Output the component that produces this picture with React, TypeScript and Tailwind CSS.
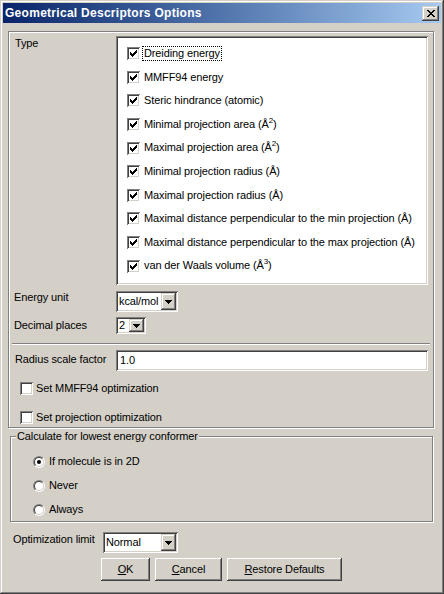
import React from "react"

const font = "font-['Liberation_Sans',Arial,sans-serif]"
const sunken = "shadow-[inset_1px_1px_#808080,inset_-1px_-1px_#ffffff,inset_2px_2px_#404040,inset_-2px_-2px_#d4d0c8]"
const raised = "shadow-[inset_-1px_-1px_#404040,inset_1px_1px_#ffffff,inset_-2px_-2px_#808080,inset_2px_2px_#d4d0c8]"
const raisedSmall = "shadow-[inset_-1px_-1px_#404040,inset_1px_1px_#d4d0c8,inset_-2px_-2px_#808080,inset_2px_2px_#ffffff]"
const etched = "border border-[#808080] shadow-[1px_1px_0_#ffffff,inset_1px_1px_0_#ffffff]"

// pixel glyphs, one string per row
const Pixels = ({rows, color="#000"}:{rows:string[], color?:string}) => (
    <svg width={rows[0].length} height={rows.length} shapeRendering="crispEdges">
        {rows.map((r, y) => r.split("").map((c, x) => c === "#" ? <rect key={x + "-" + y} x={x} y={y} width="1" height="1" fill={color}/> : null))}
    </svg>
)

const CHECK = [
    "......#",
    ".....##",
    "#...###",
    "##.###.",
    "#####..",
    ".###...",
    "..#....",
]
const ARROW = ["#######", ".#####.", "..###..", "...#..."]
const CLOSE = [
    "##....##",
    ".##..##.",
    "..####..",
    "...##...",
    "..####..",
    ".##..##.",
    "##....##",
]

const CheckBox = ({checked}:{checked?:boolean}) => (
    <span className={`flex items-center justify-center w-[13px] h-[13px] bg-white shrink-0 ${sunken}`}>
        {checked ? <Pixels rows={CHECK}/> : null}
    </span>
)

const Radio = ({checked}:{checked?:boolean}) => (
    <span className="block w-[12px] h-[12px] shrink-0 rounded-full border border-t-[#808080] border-l-[#808080] border-b-white border-r-white">
        <span className="flex w-full h-full items-center justify-center rounded-full border border-t-[#404040] border-l-[#404040] border-b-[#d4d0c8] border-r-[#d4d0c8] bg-white">
            {checked ? <span className="block w-[4px] h-[4px] rounded-full bg-black"/> : null}
        </span>
    </span>
)

const Combo = ({value, className}:{value:string, className:string}) => (
    <div className={`flex items-center bg-white p-[2px] ${sunken} ${className}`}>
        <span className="flex-1 pl-[1px] leading-[13px] overflow-hidden whitespace-nowrap">{value}</span>
        <span className={`flex h-full w-[15px] items-center justify-center bg-[#d4d0c8] ${raisedSmall}`}>
            <Pixels rows={ARROW}/>
        </span>
    </div>
)

const Button = ({children, className}:{children:React.ReactNode, className:string}) => (
    <div className={`flex h-[23px] items-center justify-center bg-[#d4d0c8] ${raised} ${className}`}>{children}</div>
)

const Sup = ({n}:{n:string}) => <span className="relative -top-[5px] text-[8px]">{n}</span>

const items: {label:React.ReactNode, focus?:boolean}[] = [
    {label:"Dreiding energy", focus:true},
    {label:"MMFF94 energy"},
    {label:"Steric hindrance (atomic)"},
    {label:<>Minimal projection area (Å<Sup n="2"/>)</>},
    {label:<>Maximal projection area (Å<Sup n="2"/>)</>},
    {label:"Minimal projection radius (Å)"},
    {label:"Maximal projection radius (Å)"},
    {label:"Maximal distance perpendicular to the min projection (Å)"},
    {label:"Maximal distance perpendicular to the max projection (Å)"},
    {label:<>van der Waals volume (Å<Sup n="3"/>)</>},
]

export default function App(){
    return(
        <div className={`w-[444px] h-[594px] bg-[#d4d0c8] p-[3px] text-[11px] leading-[13px] tracking-[-0.12px] text-black ${font} shadow-[inset_-1px_-1px_#404040,inset_1px_1px_#d4d0c8,inset_-2px_-2px_#808080,inset_2px_2px_#ffffff]`}>
            <div className="flex h-[20px] items-center justify-between pl-[2px] pr-[2px] bg-gradient-to-r from-[#0a246a] to-[#a6caf0]">
                <span className="font-bold text-[12px] tracking-[0.28px] text-white">Geometrical Descriptors Options</span>
                <span className={`flex w-[17px] h-[15px] items-center justify-center bg-[#d4d0c8] ${raisedSmall}`}>
                    <Pixels rows={CLOSE}/>
                </span>
            </div>

            <div className={`ml-[5px] mt-[8px] w-[426px] h-[397px] ${etched}`}>
                <div className="flex mt-[4px]">
                    <div className="w-[107px] pl-[6px] pt-[1px]">Type</div>
                    <div className={`w-[312px] h-[249px] bg-white pt-[6px] ${sunken}`}>
                        {items.map((it, i) => (
                            <div key={i} className="flex h-[23.6px] items-center pl-[11px]">
                                <CheckBox checked/>
                                <span className={`ml-[2px] px-[1px] border ${it.focus ? "border-dotted border-black" : "border-transparent"}`}>{it.label}</span>
                            </div>
                        ))}
                    </div>
                </div>

                <div className="flex mt-[6px]">
                    <div className="w-[107px] pl-[5px]">Energy unit</div>
                    <Combo value="kcal/mol" className="w-[62px] h-[21px]"/>
                </div>
                <div className="flex mt-[5px]">
                    <div className="w-[107px] pl-[5px] pt-[2px]">Decimal places</div>
                    <Combo value="2" className="w-[30px] h-[17px]"/>
                </div>

                <div className="mx-[3px] mt-[9px] h-[2px] border-t border-[#808080] border-b border-b-white"/>

                <div className="flex mt-[5px]">
                    <div className="w-[107px] pl-[6px] pt-[3px]">Radius scale factor</div>
                    <div className={`w-[312px] h-[21px] bg-white pl-[4px] pt-[4px] ${sunken}`}>1.0</div>
                </div>

                <div className="flex items-center mt-[11px] ml-[11px]">
                    <CheckBox/>
                    <span className="ml-[3px]">Set MMFF94 optimization</span>
                </div>
                <div className="flex items-center mt-[16px] ml-[11px]">
                    <CheckBox/>
                    <span className="ml-[3px]">Set projection optimization</span>
                </div>
            </div>

            <div className={`relative ml-[7px] mt-[8px] w-[423px] h-[86px] ${etched}`}>
                <span className="absolute -top-[7px] left-[5px] bg-[#d4d0c8] px-[1px]">Calculate for lowest energy conformer</span>
                <div className="flex flex-col gap-[11px] pl-[22px] pt-[18px]">
                    {["If molecule is in 2D", "Never", "Always"].map((t, i) => (
                        <div key={t} className="flex items-center">
                            <Radio checked={i === 0}/>
                            <span className="ml-[4px]">{t}</span>
                        </div>
                    ))}
                </div>
            </div>

            <div className="flex mt-[10px]">
                <div className="w-[100px] pl-[10px] pt-[1px]">Optimization limit</div>
                <Combo value="Normal" className="w-[75px] h-[21px]"/>
            </div>

            <div className="flex mt-[5px] ml-[98px] gap-[5px]">
                <Button className="w-[49px]"><span className="underline">O</span>K</Button>
                <Button className="w-[67px]"><span className="underline">C</span>ancel</Button>
                <Button className="w-[115px]"><span className="underline">R</span>estore Defaults</Button>
            </div>
        </div>
    )
}
